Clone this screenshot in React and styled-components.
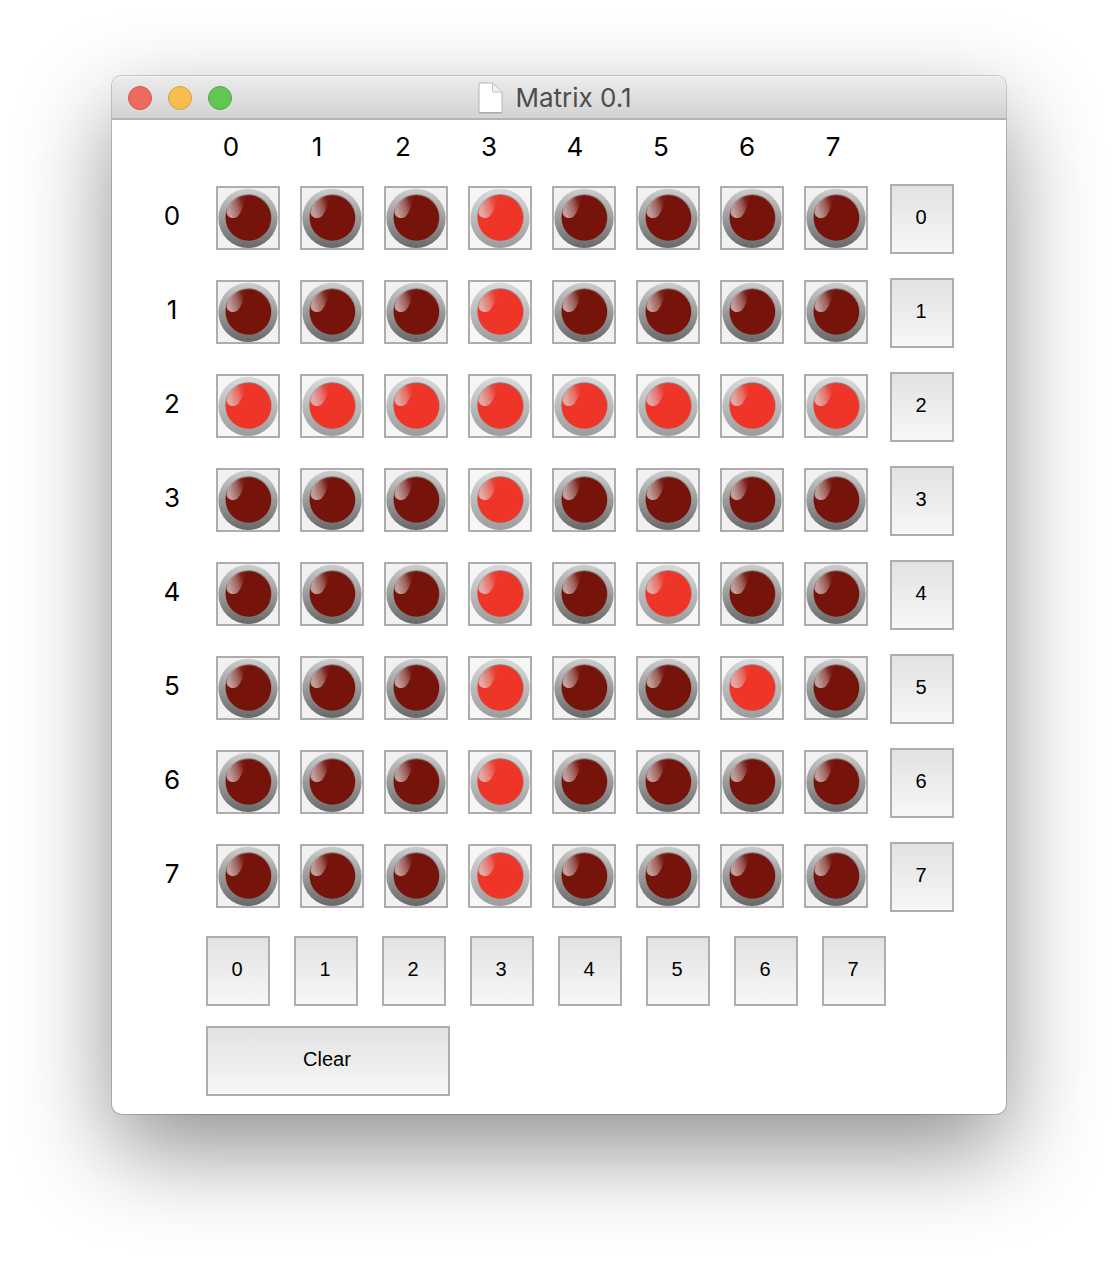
import React, { useState } from "react";
import styled, { createGlobalStyle } from "styled-components";

const GlobalStyle = createGlobalStyle`
  *, *::before, *::after { box-sizing: border-box; }
  body { margin: 0; background: #fff; }
`;

const Desktop = styled.div`
  padding: 76px 112px 148px;
  font-family: Inter, "Liberation Sans", sans-serif;
  overflow: hidden;
`;

const Window = styled.main`
  min-width: 864px;
  border-radius: 10px;
  background: #fff;
  box-shadow: 0 0 0 1px rgba(0, 0, 0, 0.18), 0 36px 94px rgba(0, 0, 0, 0.44);
`;

const TitleBar = styled.header`
  display: grid;
  grid-template-columns: 1fr auto 1fr;
  align-items: center;
  height: 44px;
  padding: 2px 24px 0 16px;
  border-bottom: 2px solid #b4b4b4;
  border-radius: 10px 10px 0 0;
  background: linear-gradient(#ececec, #d3d3d3);
  box-shadow: inset 0 1px 0 #f4f4f4;
`;

const Lights = styled.div`
  display: flex;
  gap: 16px;
`;

const Light = styled.button`
  width: 24px;
  height: 24px;
  padding: 0;
  border: 1px solid ${(p) => p.$edge};
  border-radius: 50%;
  background: ${(p) => p.$fill};
`;

const Title = styled.h1`
  display: flex;
  align-items: center;
  gap: 12px;
  margin: 0;
  color: #4d4d4d;
  font-size: 26px;
  font-weight: 400;
  line-height: 32px;
`;

const Label = styled.span`
  width: ${(p) => p.$width}px;
  color: #000;
  font-size: 26px;
  line-height: 64px;
  text-align: center;
`;

const ColumnLabels = styled.div`
  display: flex;
  align-items: center;
  height: 54px;
  margin-bottom: 10px;
  padding-left: 76px;
`;

const Rows = styled.div`
  display: flex;
  flex-direction: column;
  gap: 24px;
  padding-left: 16px;
`;

const Row = styled.div`
  display: flex;
  align-items: flex-start;
`;

const Leds = styled.div`
  display: flex;
  gap: 20px;
  padding: 2px 22px 0 0;
`;

const LedButton = styled.button`
  width: 64px;
  height: 64px;
  padding: 0;
  border: 2px solid #adadad;
  background: ${(p) => (p.$lit ? "#f6f6f6" : "#f1f1f1")};

  svg { display: block; }
`;

const PushButton = styled.button`
  width: ${(p) => (p.$wide ? 244 : 64)}px;
  height: 70px;
  padding: 0 2px 4px 0;
  border: 2px solid #adadad;
  background: linear-gradient(#e2e2e2, #f7f7f7);
  color: #000;
  font-family: "Liberation Sans", Arial, sans-serif;
  font-size: 20px;
  line-height: 24px;
`;

const Footer = styled.div`
  display: flex;
  flex-direction: column;
  gap: 20px;
  padding: 24px 0 18px 94px;
`;

const ColumnButtons = styled.div`
  display: flex;
  gap: 24px;
`;

const Defs = styled.svg`
  display: block;
`;

const INDEXES = [0, 1, 2, 3, 4, 5, 6, 7];

const initialMatrix = INDEXES.map((r) =>
  INDEXES.map(
    (c) => c === 3 || r === 2 || (r === 4 && c === 5) || (r === 5 && c === 6)
  )
);

function LedDefs() {
  return (
    <Defs width="0" height="0" aria-hidden="true">
      <defs>
        <linearGradient id="ring-off" x1="0" y1="0" x2="0" y2="1">
          <stop offset="0" stopColor="#cdcdcd" />
          <stop offset="1" stopColor="#686868" />
        </linearGradient>
        <linearGradient id="ring-on" x1="0" y1="0" x2="0" y2="1">
          <stop offset="0" stopColor="#dadada" />
          <stop offset="1" stopColor="#9c9c9c" />
        </linearGradient>
        <linearGradient id="rim" x1="0" y1="0" x2="0" y2="1">
          <stop offset="0" stopColor="#4a4040" stopOpacity="0.6" />
          <stop offset="0.6" stopColor="#8a8080" stopOpacity="0.3" />
          <stop offset="1" stopColor="#a09090" stopOpacity="0.2" />
        </linearGradient>
        <linearGradient
          id="shine"
          gradientUnits="userSpaceOnUse"
          x1="11"
          y1="22"
          x2="26"
          y2="17"
        >
          <stop offset="0" stopColor="#e2dada" stopOpacity="0.7" />
          <stop offset="0.6" stopColor="#d8d0d0" stopOpacity="0.4" />
          <stop offset="1" stopColor="#d8d0d0" stopOpacity="0.05" />
        </linearGradient>
      </defs>
    </Defs>
  );
}

function Led({ lit, label, onClick }) {
  return (
    <LedButton $lit={lit} aria-label={label} aria-pressed={lit} onClick={onClick}>
      <svg width="60" height="60" viewBox="0 0 60 60" aria-hidden="true">
        <circle cx="30" cy="30.4" r="29.6" fill={lit ? "url(#ring-on)" : "url(#ring-off)"} />
        <circle cx="30.4" cy="29.8" r="23.6" fill="url(#rim)" />
        <circle cx="30.4" cy="30" r="22.8" fill={lit ? "#ef3428" : "#76130a"} />
        <path
          d="M8.6 25C9.500 16 16 9 27 7.800C27.500 15 23.500 24 20 28C16.500 31.500 9.500 30.500 8.600 25Z"
          fill="url(#shine)"
        />
      </svg>
    </LedButton>
  );
}

function DocumentIcon() {
  return (
    <svg width="25" height="32" viewBox="0 0 25 32" aria-hidden="true">
      <path d="M1 1H14.500L24 10.500V30.500H1Z" fill="#fff" stroke="#b5b5b5" />
      <path d="M14.500 1V9Q14.500 10 15.500 10H24Z" fill="#f2f2f2" stroke="#c4c4c4" />
      <path d="M1 31H24" stroke="#a3a3a3" />
    </svg>
  );
}

export default function App() {
  const [matrix, setMatrix] = useState(initialMatrix);

  const update = (matches, value) =>
    setMatrix((m) =>
      m.map((row, r) => row.map((lit, c) => (matches(r, c) ? value(lit) : lit)))
    );
  const toggle = (matches) => update(matches, (lit) => !lit);

  return (
    <Desktop>
      <GlobalStyle />
      <LedDefs />
      <Window>
        <TitleBar>
          <Lights>
            <Light aria-label="Close" $fill="#ee6a5f" $edge="#d9534a" />
            <Light aria-label="Minimize" $fill="#f6be50" $edge="#dba13b" />
            <Light aria-label="Zoom" $fill="#62c655" $edge="#4bab40" />
          </Lights>
          <Title>
            <DocumentIcon />
            Matrix 0.1
          </Title>
        </TitleBar>

        <ColumnLabels>
          {INDEXES.map((c) => (
            <Label key={c} $width={86}>{c}</Label>
          ))}
        </ColumnLabels>

        <Rows>
          {matrix.map((row, r) => (
            <Row key={r}>
              <Label $width={88}>{r}</Label>
              <Leds>
                {row.map((lit, c) => (
                  <Led
                    key={c}
                    lit={lit}
                    label={`Row ${r}, column ${c}`}
                    onClick={() => toggle((y, x) => y === r && x === c)}
                  />
                ))}
              </Leds>
              <PushButton onClick={() => toggle((y) => y === r)}>{r}</PushButton>
            </Row>
          ))}
        </Rows>

        <Footer>
          <ColumnButtons>
            {INDEXES.map((c) => (
              <PushButton key={c} onClick={() => toggle((y, x) => x === c)}>
                {c}
              </PushButton>
            ))}
          </ColumnButtons>
          <PushButton $wide onClick={() => update(() => true, () => false)}>
            Clear
          </PushButton>
        </Footer>
      </Window>
    </Desktop>
  );
}
